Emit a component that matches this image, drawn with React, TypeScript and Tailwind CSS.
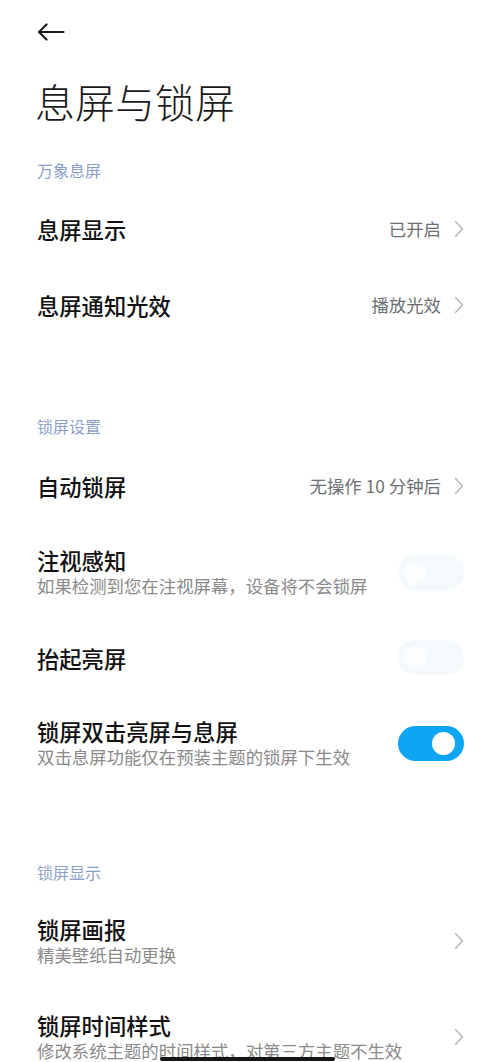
import React from "react";

const FONT = { fontFamily: '"Noto Sans CJK SC", "Noto Sans", sans-serif' };

function Chevron() {
  return (
    <svg width="10" height="18" viewBox="0 0 10 18" fill="none" className="shrink-0">
      <path d="M1.5 1.5 L8.5 9 L1.5 16.5" stroke="#b4b4b4" strokeWidth="1.4" strokeLinecap="round" strokeLinejoin="round" />
    </svg>
  );
}

function SectionHeader({ text, cls }: { text: string; cls: string }) {
  return (
    <div className={`${cls} px-[37px]`}>
      <div className="text-[16px] leading-[24px] text-[#8c9fc9]">{text}</div>
    </div>
  );
}

function Toggle({ on }: { on: boolean }) {
  if (on) {
    return (
      <div className="w-[66px] h-[35px] rounded-full bg-[#0ea5f4] flex items-center justify-end pr-[9px] shrink-0">
        <div className="w-[23px] h-[23px] rounded-full bg-white" />
      </div>
    );
  }
  return (
    <div className="w-[66px] h-[35px] rounded-full bg-[#f4f9fc] flex items-center justify-start pl-[6px] shrink-0">
      <div className="w-[23px] h-[23px] rounded-full bg-[#fbfdfe]" />
    </div>
  );
}

function Row({
  title,
  subtitle,
  value,
  right,
  py,
}: {
  title: string;
  subtitle?: string;
  value?: string;
  right: "chevron" | "on" | "off";
  py: string;
}) {
  return (
    <div className={`flex items-center justify-between pl-[37px] pr-[36px] ${py}`}>
      <div className="flex flex-col min-w-0">
        <div className="text-[22.3px] leading-[28px] font-medium text-[#111111]">{title}</div>
        {subtitle && (
          <div className="text-[17.4px] leading-[24px] text-[#8a8a8a] whitespace-nowrap">{subtitle}</div>
        )}
      </div>
      <div className="flex items-center gap-[13px] shrink-0">
        {value && <span className="text-[17.4px] leading-[24px] text-[#6b6f73]">{value}</span>}
        {right === "chevron" && <Chevron />}
        {right === "on" && <Toggle on />}
        {right === "off" && <Toggle on={false} />}
      </div>
    </div>
  );
}

export default function App() {
  return (
    <div className="relative w-[500px] h-[1062px] overflow-hidden bg-white" style={FONT}>
      <div className="h-[64px] flex items-center px-[37px]">
        <svg width="28" height="18" viewBox="0 0 28 18" fill="none">
          <path d="M26.5 9 H2 M9.5 1.5 L2 9 L9.5 16.5" stroke="#1c1c1c" strokeWidth="2.2" strokeLinecap="round" strokeLinejoin="round" />
        </svg>
      </div>
      <div className="mt-[13px] px-[35px] text-[40px] leading-[48px] font-light text-[#1a1a1a]">息屏与锁屏</div>

      <SectionHeader text="万象息屏" cls="pt-[33px] pb-[9px]" />
      <Row title="息屏显示" value="已开启" right="chevron" py="py-[24px]" />
      <Row title="息屏通知光效" value="播放光效" right="chevron" py="py-[24px]" />

      <SectionHeader text="锁屏设置" cls="pt-[71px] pb-[11px]" />
      <Row title="自动锁屏" value="无操作 10 分钟后" right="chevron" py="py-[23px]" />
      <Row title="注视感知" subtitle="如果检测到您在注视屏幕，设备将不会锁屏" right="off" py="py-[23px]" />
      <Row title="抬起亮屏" right="off" py="py-[19px]" />
      <Row title="锁屏双击亮屏与息屏" subtitle="双击息屏功能仅在预装主题的锁屏下生效" right="on" py="py-[23px]" />

      <SectionHeader text="锁屏显示" cls="pt-[68px] pb-[9px]" />
      <Row title="锁屏画报" subtitle="精美壁纸自动更换" right="chevron" py="py-[22px]" />
      <Row title="锁屏时间样式" subtitle="修改系统主题的时间样式，对第三方主题不生效" right="chevron" py="py-[22px]" />

      <div className="absolute left-[160px] bottom-[1px] w-[175px] h-[4px] rounded-full bg-[#161616]" />
    </div>
  );
}
